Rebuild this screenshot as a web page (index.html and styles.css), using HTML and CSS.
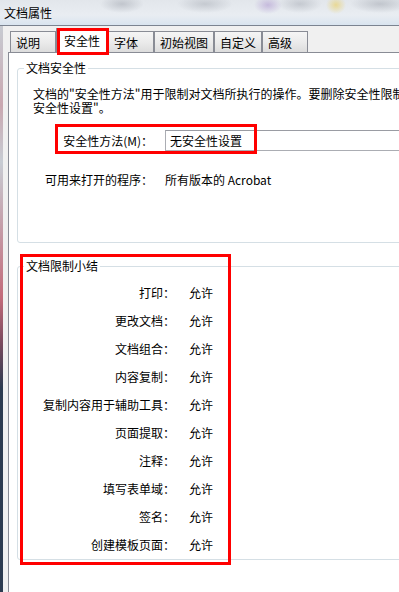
FILE: index.html
```html
<!DOCTYPE html>
<html lang="zh-CN">
<head>
<meta charset="UTF-8" />
<meta name="viewport" content="width=device-width, initial-scale=1.0"/>
<title>文档属性</title>
<link rel="stylesheet" href="styles.css">
</head>
<body>
<div class="titlebar"><span class="title">文档属性</span></div>

<div class="window">
    <div class="edge"></div>
    <div class="dialog">
        <div class="tabs">
            <div class="tab">说明</div>
            <div class="tab active">安全性<span class="mark mark-tab"></span></div>
            <div class="tab">字体</div>
            <div class="tab">初始视图</div>
            <div class="tab">自定义</div>
            <div class="tab">高级</div>
        </div>

        <div class="panel">
            <!-- Document security -->
            <fieldset class="group group-security">
                <legend>文档安全性</legend>
                <p class="desc">文档的&quot;安全性方法&quot;用于限制对文档所执行的操作。要删除安全性限制，请将安全性方法设置为&quot;无<br>安全性设置&quot;。</p>
                <div class="field field-method">
                    <span class="field-label">安全性方法(M)：</span>
                    <div class="combo">无安全性设置</div>
                    <span class="mark mark-method"></span>
                </div>
                <div class="field field-programs">
                    <span class="field-label">可用来打开的程序：</span>
                    <span>所有版本的 Acrobat</span>
                </div>
            </fieldset>

            <!-- Restriction summary -->
            <div class="summary-wrap">
                <fieldset class="group">
                    <legend>文档限制小结</legend>
                    <dl class="summary">
                        <dt>打印：</dt><dd>允许</dd>
                        <dt>更改文档：</dt><dd>允许</dd>
                        <dt>文档组合：</dt><dd>允许</dd>
                        <dt>内容复制：</dt><dd>允许</dd>
                        <dt>复制内容用于辅助工具：</dt><dd>允许</dd>
                        <dt>页面提取：</dt><dd>允许</dd>
                        <dt>注释：</dt><dd>允许</dd>
                        <dt>填写表单域：</dt><dd>允许</dd>
                        <dt>签名：</dt><dd>允许</dd>
                        <dt>创建模板页面：</dt><dd>允许</dd>
                    </dl>
                </fieldset>
                <span class="mark mark-summary"></span>
            </div>
        </div>
    </div>
</div>
</body>
</html>
```

FILE: styles.css
```css
body, html {
    margin: 0;
    padding: 0;
    width: 399px;
    height: 592px;
    overflow: hidden;
}

body {
    font-family: "Noto Sans CJK SC", sans-serif;
    font-size: 12px;
    color: #000;
    background: #f0f0f0;
}

/* Blurred aero glass behind the title */
.titlebar {
    height: 25px;
    line-height: 25px;
    padding-left: 4px;
    border-bottom: 1px solid #7b8390;
    background:
        radial-gradient(ellipse 22px 9px at 122px 4px, rgba(150,155,165,0.45), transparent),
        radial-gradient(ellipse 28px 9px at 205px 4px, rgba(150,155,165,0.4), transparent),
        radial-gradient(ellipse 14px 9px at 268px 5px, rgba(160,130,200,0.45), transparent),
        radial-gradient(ellipse 22px 9px at 300px 4px, rgba(150,155,165,0.4), transparent),
        radial-gradient(ellipse 10px 9px at 336px 5px, rgba(235,205,90,0.6), transparent),
        radial-gradient(ellipse 30px 9px at 380px 4px, rgba(150,155,165,0.45), transparent),
        linear-gradient(to bottom, #e2e6eb, #e9edf2 60%, #d9e4ef);
}

.title {
    color: #000;
}

.window {
    display: flex;
    height: 566px;
}

/* Desktop showing through at the left */
.edge {
    width: 3px;
    flex: none;
    background: linear-gradient(to bottom, #c7cbd2 0%, #c9a7b0 14%, #c7ccd3 24%, #c26a7a 48%, #7a4a5e 56%, #2c3b50 64%, #2c3b50 100%);
}

.dialog {
    flex: 1;
    min-width: 0;
    padding-left: 5px;
    overflow: hidden;
}

.tabs {
    display: flex;
    align-items: flex-end;
    height: 26px;
    padding-left: 2px;
}

.tab {
    box-sizing: border-box;
    height: 21px;
    min-width: 46px;
    padding: 2px 5px 0;
    line-height: 17px;
    border: 1px solid #898c95;
    border-bottom: none;
    background: linear-gradient(to bottom, #f5f5f5, #ebebeb 50%, #dcdcdc);
    white-space: nowrap;
}

.tab.active {
    position: relative;
    height: 25px;
    margin-bottom: -1px;
    padding: 3px 7px 0;
    background: #fff;
    z-index: 2;
}

.panel {
    position: relative;
    box-sizing: border-box;
    width: 700px;
    height: 620px;
    background: #fff;
    border: 1px solid #898c95;
    border-right: none;
}

.group {
    margin: 8px 8px 0 8px;
    padding: 0 0 0 8px;
    border: 1px solid #d5dfe5;
    border-radius: 3px;
    min-width: 0;
}

.group legend {
    padding: 0 2px;
    margin-left: -2px;
    line-height: 14px;
}

.group-security {
    padding-bottom: 55px;
}

.desc {
    margin: 12px 0 0 7px;
    line-height: 14px;
    white-space: nowrap;
}

.field {
    display: grid;
    grid-template-columns: 127px auto;
    column-gap: 12px;
    align-items: center;
}

.field-label {
    text-align: right;
    white-space: nowrap;
}

.field-method {
    position: relative;
    margin-top: 15px;
    height: 21px;
}

.field-programs {
    margin-top: 22px;
    line-height: 14px;
}

.combo {
    box-sizing: border-box;
    width: 320px;
    height: 21px;
    line-height: 19px;
    padding-left: 4px;
    background: #fff;
    border: 1px solid #abadb3;
    border-top-color: #9a9ca3;
}

.summary-wrap {
    position: relative;
    margin: 16px 0 0 8px;
}

.summary-wrap .group {
    margin: 0 8px 0 0;
}

.summary {
    display: grid;
    grid-template-columns: 149px auto;
    column-gap: 14px;
    margin: 0;
    padding-top: 6px;
    line-height: 28px;
}

.summary dt {
    text-align: right;
    white-space: nowrap;
}

.summary dd {
    margin: 0;
}

/* Red annotation boxes drawn over the dialog */
.mark {
    position: absolute;
    box-sizing: border-box;
    border: 3px solid #ff0000;
    pointer-events: none;
}

.mark-tab {
    left: 0;
    top: -1px;
    width: 52px;
    height: 27px;
}

.mark-method {
    left: 29px;
    top: -6px;
    width: 202px;
    height: 30px;
}

.mark-summary {
    left: 3px;
    top: -5px;
    width: 211px;
    height: 311px;
}
```
